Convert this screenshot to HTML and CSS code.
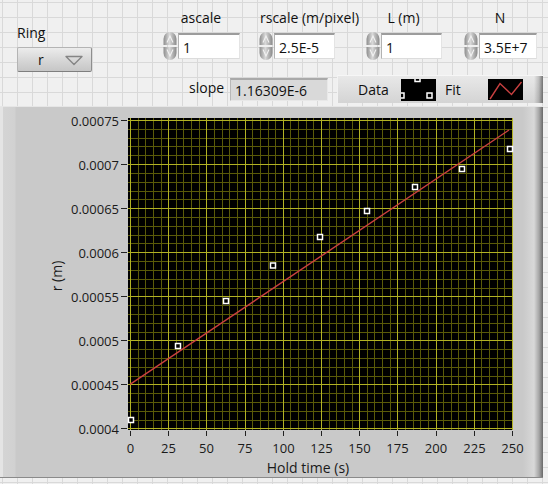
FILE: index.html
```html
<!DOCTYPE html>
<html>
<head>
<meta charset="utf-8">
<link rel="stylesheet" href="styles.css">
</head>
<body>
<div class="panel">
  <svg class="defs" width="0" height="0">
    <defs>
      <linearGradient id="spg" x1="0" y1="0" x2="1" y2="0">
        <stop offset="0" stop-color="#8e8e8e"/>
        <stop offset="0.45" stop-color="#d9d9d9"/>
        <stop offset="1" stop-color="#8a8a8a"/>
      </linearGradient>
    </defs>
  </svg>

  <div class="row1">
    <div class="ring-group">
      <div class="lbl">Ring</div>
      <div class="ring">
        <span class="ring-val">r</span>
        <svg class="ring-tri" width="18" height="11" viewBox="0 0 18 11"><path d="M1 1.5 H17 L9 9.5 Z" fill="none" stroke="#858585" stroke-width="1.4" stroke-linejoin="round"/></svg>
      </div>
    </div>

    <div class="num g-ascale">
      <div class="lbl center">ascale</div>
      <div class="ctl">
        <svg class="spin" width="16" height="30" viewBox="0 0 16 30"><path d="M1.5 14 V8 A6.5 7 0 0 1 14.5 8 V14 Z" fill="url(#spg)"/><path d="M1.5 16 V22 A6.5 7 0 0 0 14.5 22 V16 Z" fill="url(#spg)"/><path d="M5 11.5 L8 5 L11 11.5" fill="none" stroke="#f2f2f2" stroke-width="1.1"/><path d="M5 18.5 L8 25 L11 18.5" fill="none" stroke="#f2f2f2" stroke-width="1.1"/></svg>
        <div class="field">1</div>
      </div>
    </div>

    <div class="num g-rscale">
      <div class="lbl left">rscale (m/pixel)</div>
      <div class="ctl">
        <svg class="spin" width="16" height="30" viewBox="0 0 16 30"><path d="M1.5 14 V8 A6.5 7 0 0 1 14.5 8 V14 Z" fill="url(#spg)"/><path d="M1.5 16 V22 A6.5 7 0 0 0 14.5 22 V16 Z" fill="url(#spg)"/><path d="M5 11.5 L8 5 L11 11.5" fill="none" stroke="#f2f2f2" stroke-width="1.1"/><path d="M5 18.5 L8 25 L11 18.5" fill="none" stroke="#f2f2f2" stroke-width="1.1"/></svg>
        <div class="field">2.5E-5</div>
      </div>
    </div>

    <div class="num g-l">
      <div class="lbl center">L (m)</div>
      <div class="ctl">
        <svg class="spin" width="16" height="30" viewBox="0 0 16 30"><path d="M1.5 14 V8 A6.5 7 0 0 1 14.5 8 V14 Z" fill="url(#spg)"/><path d="M1.5 16 V22 A6.5 7 0 0 0 14.5 22 V16 Z" fill="url(#spg)"/><path d="M5 11.5 L8 5 L11 11.5" fill="none" stroke="#f2f2f2" stroke-width="1.1"/><path d="M5 18.5 L8 25 L11 18.5" fill="none" stroke="#f2f2f2" stroke-width="1.1"/></svg>
        <div class="field">1</div>
      </div>
    </div>

    <div class="num g-n">
      <div class="lbl center">N</div>
      <div class="ctl">
        <svg class="spin" width="16" height="30" viewBox="0 0 16 30"><path d="M1.5 14 V8 A6.5 7 0 0 1 14.5 8 V14 Z" fill="url(#spg)"/><path d="M1.5 16 V22 A6.5 7 0 0 0 14.5 22 V16 Z" fill="url(#spg)"/><path d="M5 11.5 L8 5 L11 11.5" fill="none" stroke="#f2f2f2" stroke-width="1.1"/><path d="M5 18.5 L8 25 L11 18.5" fill="none" stroke="#f2f2f2" stroke-width="1.1"/></svg>
        <div class="field">3.5E+7</div>
      </div>
    </div>
  </div>

  <div class="row2">
    <div class="slope-lbl">slope</div>
    <div class="slope-field">1.16309E-6</div>
    <div class="legend">
      <span class="leg-lbl leg-data">Data</span>
      <svg class="swatch" width="35" height="22" viewBox="0 0 35 22">
        <rect x="0" y="0" width="35" height="22" fill="#000"/>
        <rect x="-2" y="14" width="5" height="5" fill="#000" stroke="#fff" stroke-width="1.5"/>
        <rect x="14" y="-2.5" width="5" height="5" fill="#000" stroke="#fff" stroke-width="1.5"/>
        <rect x="26" y="14" width="5" height="5" fill="#000" stroke="#fff" stroke-width="1.5"/>
      </svg>
      <span class="leg-lbl leg-fit">Fit</span>
      <svg class="swatch" width="35" height="21" viewBox="0 0 35 21">
        <rect x="0" y="0" width="35" height="21" fill="#000"/>
        <polyline points="2,20 12,4.5 23.5,15.5 33.5,3" fill="none" stroke="#c84040" stroke-width="1.4"/>
      </svg>
    </div>
  </div>

  <div class="graph">
    <svg width="543" height="372" viewBox="0 106 543 372">
      <rect x="128" y="118" width="385" height="312" fill="#000"/>
      <path fill="none" stroke="#5a5a08" stroke-width="1" d="M138.5 118v312M145.5 118v312M153.5 118v312M161.5 118v312M176.5 118v312M183.5 118v312M191.5 118v312M199.5 118v312M214.5 118v312M222.5 118v312M229.5 118v312M237.5 118v312M252.5 118v312M260.5 118v312M268.5 118v312M275.5 118v312M290.5 118v312M298.5 118v312M306.5 118v312M313.5 118v312M329.5 118v312M336.5 118v312M344.5 118v312M352.5 118v312M367.5 118v312M374.5 118v312M382.5 118v312M390.5 118v312M405.5 118v312M413.5 118v312M420.5 118v312M428.5 118v312M443.5 118v312M451.5 118v312M458.5 118v312M466.5 118v312M481.5 118v312M489.5 118v312M497.5 118v312M504.5 118v312
      M128 129.5h385M128 138.5h385M128 146.5h385M128 155.5h385M128 173.5h385M128 182.5h385M128 191.5h385M128 199.5h385M128 217.5h385M128 226.5h385M128 235.5h385M128 243.5h385M128 261.5h385M128 270.5h385M128 279.5h385M128 288.5h385M128 305.5h385M128 314.5h385M128 323.5h385M128 332.5h385M128 349.5h385M128 358.5h385M128 367.5h385M128 376.5h385M128 393.5h385M128 402.5h385M128 411.5h385M128 420.5h385"/>
      <path fill="none" stroke="#b2b224" stroke-width="1" d="M130.5 118v312M168.5 118v312M206.5 118v312M245.5 118v312M283.5 118v312M321.5 118v312M359.5 118v312M397.5 118v312M436.5 118v312M474.5 118v312M512.5 118v312
      M128 120.5h385M128 164.5h385M128 208.5h385M128 252.5h385M128 296.5h385M128 340.5h385M128 384.5h385M128 428.5h385"/>
      <line x1="130" y1="384.4" x2="509" y2="130" stroke="#cc4040" stroke-width="1.4"/>
      <g fill="#000" stroke="#fff" stroke-width="1.5">
        <rect x="128.5" y="417.5" width="5" height="5"/>
        <rect x="175.5" y="343.5" width="5" height="5"/>
        <rect x="223.5" y="298.5" width="5" height="5"/>
        <rect x="270.5" y="263" width="5" height="5"/>
        <rect x="317.5" y="234.5" width="5" height="5"/>
        <rect x="364.5" y="208.5" width="5" height="5"/>
        <rect x="412.5" y="184.5" width="5" height="5"/>
        <rect x="459.5" y="166.5" width="5" height="5"/>
        <rect x="507.5" y="146.5" width="5" height="5"/>
      </g>
      <path fill="none" stroke="#222" stroke-width="1" d="M121 120.5h6M121 164.5h6M121 208.5h6M121 252.5h6M121 296.5h6M121 340.5h6M121 384.5h6M121 428.5h6
      M130.5 431v5M168.5 431v5M206.5 431v5M245.5 431v5M283.5 431v5M321.5 431v5M359.5 431v5M397.5 431v5M436.5 431v5M474.5 431v5M512.5 431v5"/>
      <g class="ylab" text-anchor="end">
        <text x="119" y="126">0.00075</text>
        <text x="119" y="170">0.0007</text>
        <text x="119" y="214">0.00065</text>
        <text x="119" y="258">0.0006</text>
        <text x="119" y="302">0.00055</text>
        <text x="119" y="346">0.0005</text>
        <text x="119" y="390">0.00045</text>
        <text x="119" y="434">0.0004</text>
      </g>
      <g class="xlab" text-anchor="middle">
        <text x="130.5" y="453">0</text>
        <text x="168.5" y="453">25</text>
        <text x="206.5" y="453">50</text>
        <text x="245" y="453">75</text>
        <text x="283.5" y="453">100</text>
        <text x="321.5" y="453">125</text>
        <text x="359.5" y="453">150</text>
        <text x="397.5" y="453">175</text>
        <text x="436" y="453">200</text>
        <text x="474.5" y="453">225</text>
        <text x="512.5" y="453">250</text>
      </g>
      <text class="axtitle" x="308" y="473" text-anchor="middle">Hold time (s)</text>
      <text class="axtitle" x="0" y="0" text-anchor="middle" transform="translate(62 276) rotate(-90)">r (m)</text>
    </svg>
  </div>
</div>
</body>
</html>
```

FILE: styles.css
```css
html, body {
  margin: 0;
  padding: 0;
}

body {
  width: 548px;
  height: 484px;
  overflow: hidden;
  font-family: "Open Sans", "Liberation Sans", sans-serif;
  font-size: 14px;
  color: #111;
}

.panel {
  width: 548px;
  height: 484px;
  background-color: #f0f0f0;
  background-image:
    linear-gradient(to right, #d9d9d9 1px, transparent 1px),
    linear-gradient(to bottom, #d9d9d9 1px, transparent 1px);
  background-size: 15px 15px;
  background-position: 2px 2px;
}

.defs {
  display: block;
  width: 0;
  height: 0;
}

.row1 {
  display: flex;
  align-items: flex-start;
  height: 75px;
}

.lbl {
  height: 16px;
  line-height: 16px;
  white-space: nowrap;
}

.lbl.center {
  text-align: center;
}

.lbl.left {
  text-align: left;
  padding-left: 2px;
}

.ring-group {
  margin-left: 17px;
  width: 75px;
  padding-top: 25px;
}

.ring {
  box-sizing: border-box;
  margin-top: 6px;
  width: 75px;
  height: 25px;
  display: flex;
  align-items: center;
  background: linear-gradient(#ececec, #d6d6d6 55%, #c6c6c6);
  border: 1px solid #b4b4b4;
  border-right-color: #8e8e8e;
  border-bottom-color: #7e7e7e;
  border-radius: 2px;
}

.ring-val {
  display: inline-block;
  width: 27px;
  padding-left: 20px;
  line-height: 16px;
}

.ring-tri {
  display: block;
  margin-top: 1px;
}

.num {
  padding-top: 10px;
}

.g-ascale {
  margin-left: 70px;
  width: 78px;
}

.g-rscale {
  margin-left: 18px;
  width: 77px;
}

.g-l {
  margin-left: 30px;
  width: 77px;
}

.g-n {
  margin-left: 21px;
  width: 74px;
}

.ctl {
  display: flex;
  align-items: center;
  margin-top: 5px;
  height: 30px;
}

.spin {
  display: block;
  flex: none;
}

.field {
  box-sizing: border-box;
  flex: 1;
  height: 26px;
  background: #fff;
  border-top: 2px solid #9c9c9c;
  border-left: 1px solid #b2b2b2;
  border-right: 1px solid #e4e4e4;
  border-bottom: 1px solid #dcdcdc;
  padding: 2px 0 0 4px;
  line-height: 21px;
  white-space: nowrap;
}

.row2 {
  display: flex;
  align-items: flex-start;
  height: 31px;
}

.slope-lbl {
  margin-left: 189px;
  width: 41px;
  margin-top: 5px;
  line-height: 16px;
}

.slope-field {
  box-sizing: border-box;
  margin-top: 3px;
  width: 98px;
  height: 23px;
  background: #d9d9d9;
  border-top: 2px solid #a9a9a9;
  border-left: 1px solid #b8b8b8;
  border-right: 1px solid #e8e8e8;
  border-bottom: 1px solid #e8e8e8;
  padding: 3px 0 0 4px;
  line-height: 16px;
  white-space: nowrap;
}

.legend {
  box-sizing: border-box;
  margin-left: 9px;
  width: 206px;
  height: 28px;
  display: flex;
  align-items: center;
  border-top: 1px solid #f6f6f6;
  border-left: 1px solid #f2f2f2;
  background:
    linear-gradient(to right, rgba(0, 0, 0, 0) calc(100% - 9px), rgba(0, 0, 0, 0.18) calc(100% - 4px), rgba(0, 0, 0, 0.5) 100%),
    linear-gradient(#e8e8e8, #d4d4d4);
}

.leg-lbl {
  display: inline-block;
  width: 43px;
  line-height: 16px;
}

.leg-data {
  margin-left: 20px;
}

.leg-fit {
  margin-left: 9px;
}

.swatch {
  display: block;
  flex: none;
}

.graph {
  box-sizing: border-box;
  width: 543px;
  height: 372px;
  border-top: 1px solid #e6e6e6;
  border-bottom: 1px solid #8a8a8a;
  background: linear-gradient(to right,
    #e4e4e4 0, #e4e4e4 3px,
    #d4d4d4 3px, #d1d1d1 15px,
    #c9c9c9 16px, #c9c9c9 calc(100% - 20px),
    #d8d8d8 calc(100% - 9px), #a6a6a6 calc(100% - 4px),
    #686868 100%);
  overflow: hidden;
}

.graph svg {
  display: block;
  margin-top: -1px;
}

.ylab text,
.xlab text {
  font-family: "Open Sans", "Liberation Sans", sans-serif;
  font-size: 13px;
  fill: #1a1a1a;
}

.axtitle {
  font-family: "Open Sans", "Liberation Sans", sans-serif;
  font-size: 14px;
  fill: #1a1a1a;
}
```
